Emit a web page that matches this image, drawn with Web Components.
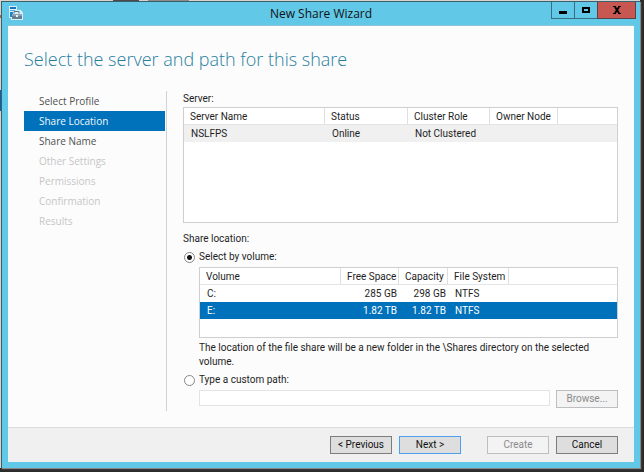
<!DOCTYPE html>
<html lang="en">
<head>
<meta charset="utf-8">
<title>New Share Wizard</title>
<style>
  html, body { height: 100%; }
  body { margin: 0; font: 10px/14px Roboto, "Open Sans", sans-serif; color: #1e1e1e; }
</style>
</head>
<body>
<share-wizard></share-wizard>

<template id="share-wizard">
  <style>
    :host { display: flex; box-sizing: border-box; min-height: 100%; padding: 1px 4px 4px 1px;
      background:
        linear-gradient(90deg, transparent 113px, #4b4b4b 113px 139px, transparent 139px 148px, #8d8d88 148px 189px, transparent 189px) 0 0 / 100% 1px no-repeat,
        linear-gradient(#0b62a8, #0b62a8) 0 90px / 1px 21px no-repeat,
        linear-gradient(#b3653a, #b3653a) 0 15px / 1px 3px no-repeat,
        linear-gradient(#d6d4cd, #d6d4cd) 0 0 / calc(100% - 4px) 1px no-repeat,
        linear-gradient(#d6d4cd, #d6d4cd) 0 0 / 1px calc(100% - 4px) no-repeat,
        #2c2b2b; }
    .window { flex: 1; display: flex; flex-direction: column; min-width: 0;
      border: solid #3b5f6c; border-width: 1px 0 0 1px; background: #62c8e8;
      box-shadow: 1px 1px 1px #8a8585; }
    .client { flex: 1; display: flex; flex-direction: column; margin: 0 6px 6px 6px; background: #fcfcfc;
      border-top: 1px solid #8fc4d6; }
    h1 { margin: 0; padding: 19px 16px 18px; font: 300 18px/28px "Open Sans", sans-serif; color: #277f9f; }
    .body { flex: 1; display: flex; padding: 0 16px 16px; gap: 16px; }
    wizard-steps { flex: 0 0 143px; }
    location-form { flex: 1; min-width: 0; }
    footer { display: flex; justify-content: flex-end; gap: 7px; padding: 8px 16px; background: #f0f0f0;
      border-top: 1px solid #dcdcdc; }
    .gap { width: 12px; }
  </style>
  <div class="window">
    <title-bar>New Share Wizard</title-bar>
    <div class="client">
      <h1>Select the server and path for this share</h1>
      <div class="body">
        <wizard-steps></wizard-steps>
        <location-form></location-form>
      </div>
      <footer>
        <push-button>&lt; Previous</push-button>
        <push-button primary>Next &gt;</push-button>
        <span class="gap"></span>
        <push-button disabled>Create</push-button>
        <push-button>Cancel</push-button>
      </footer>
    </div>
  </div>
</template>

<template id="title-bar">
  <style>
    :host { display: grid; grid-template-columns: 1fr auto 1fr; height: 23px; color: #111;
      font: 12px/24px "Open Sans", sans-serif; }
    .icon { margin: 4px 0 0 7px; display: block; }
    .controls { display: flex; justify-content: flex-end; align-items: flex-start; margin-right: 4px; }
    button { display: grid; place-items: center; box-sizing: border-box; width: 24px; height: 17px; margin: 0 0 0 -1px; padding: 0;
      border: 1px solid #356f82; border-top: 0; background: none; }
    button.close { width: 39px; background: #c75750; border-color: #5c4048; }
  </style>
  <svg class="icon" width="15" height="15" viewBox="0 0 15 15" aria-hidden="true">
    <path d="M0 0h8v4h4l2 3v7H2v-2H0z" fill="#d9eef6"/>
    <path d="M1 1h6v2H1z" fill="#1676bd"/>
    <path d="M1 4h5v1H1z" fill="#5aaee0"/>
    <path d="M1 6h3v5H1z" fill="#1f85c9"/>
    <path d="M5 7.500V5.500h5v2" fill="none" stroke="#53798d"/>
    <path d="M3 8h10v2H3z" fill="#8da3b2"/>
    <path d="M3 10h10v3H3z" fill="#647f92"/>
    <path d="M7 9h2v2H7z" fill="#e9f3f7"/>
  </svg>
  <slot></slot>
  <div class="controls">
    <button aria-label="Minimize"><svg width="10" height="10"><path d="M1 6h8v3H1z"/></svg></button>
    <button aria-label="Maximize"><svg width="10" height="10"><path d="M2 3h6v4H2z" fill="none" stroke="#000" stroke-width="2"/></svg></button>
    <button class="close" aria-label="Close"><svg width="10" height="10"><path d="M3 2l4 6M7 2L3 8" stroke="#000" stroke-width="2"/><path d="M1 1h3v1H1zM6 1h3v1H6zM1 8h3v1H1zM6 8h3v1H6z"/></svg></button>
  </div>
</template>

<template id="wizard-steps">
  <style>
    :host { display: block; box-sizing: border-box; border-right: 1px solid #d2d2d2; padding-right: 1px;
      font: 10px/20px "Open Sans", sans-serif; color: #505050; }
    ol { list-style: none; margin: 0; padding: 0; }
    li > * { display: block; padding-left: 15px; }
    a { color: inherit; text-decoration: none; }
    a[aria-current] { background: #0072bc; color: #f2f8fc; }
    span { color: #c6c6c6; }
  </style>
  <nav aria-label="Steps"><ol>
    <li><a href="#profile">Select Profile</a></li>
    <li><a href="#location" aria-current="step">Share Location</a></li>
    <li><a href="#name">Share Name</a></li>
    <li><span>Other Settings</span></li>
    <li><span>Permissions</span></li>
    <li><span>Confirmation</span></li>
    <li><span>Results</span></li>
  </ol></nav>
</template>

<template id="location-form">
  <style>
    :host { display: block; }
    .caption { line-height: 16px; }
    .servers { height: 116px; margin-bottom: 8px; }
    .volumes { height: 71px; }
    .option { display: flex; align-items: center; gap: 4px; height: 20px; }
    input[type=radio] { appearance: none; box-sizing: border-box; width: 11px; height: 11px; margin: 0 0 0 1px;
      border: 1px solid #858585; border-radius: 50%; background: #fff; }
    input[type=radio]:checked { background: radial-gradient(circle, #151515 0 2px, #fff 3px); }
    .nested { margin-left: 16px; }
    p { margin: 3px 0 1px; }
    .path { display: flex; gap: 6px; }
    .path input { flex: 1; min-width: 0; box-sizing: border-box; height: 16px; padding: 0 4px; border: 1px solid #e3e3e8; background: #fff; font: inherit; }
  </style>
  <div class="caption">Server:</div>
  <data-grid class="servers" kind="servers"></data-grid>
  <div class="caption">Share location:</div>
  <div class="option"><input type="radio" name="where" id="volume" checked><label for="volume">Select by volume:</label></div>
  <div class="nested">
    <data-grid class="volumes" kind="volumes"></data-grid>
    <p>The location of the file share will be a new folder in the \Shares directory on the selected volume.</p>
  </div>
  <div class="option"><input type="radio" name="where" id="custom"><label for="custom">Type a custom path:</label></div>
  <div class="nested path"><input type="text" aria-label="Custom path" disabled><push-button disabled>Browse...</push-button></div>
</template>

<template id="data-grid">
  <style>
    :host { display: block; box-sizing: border-box; border: 1px solid #cfcfcf; background: #fff; overflow: hidden; }
    table { width: 100%; table-layout: fixed; border-collapse: separate; border-spacing: 0; }
    th, td { box-sizing: border-box; height: 17px; padding: 0 4px 0 6px; text-align: left; font-weight: normal; line-height: 14px; white-space: nowrap; }
    th { padding-top: 2px; border-right: 1px solid #dedfe1; border-bottom: 1px solid #e3e4e6; }
    th:last-child { border-right: 0; }
    td { padding: 0 2px 0 7px; }
    .num { text-align: right; }
    tr.hover td { background: #f0f0f0; }
    tr.selected td { background: #0072bc; color: #fff; }
  </style>
  <table><colgroup></colgroup><thead></thead><tbody></tbody></table>
</template>

<template id="push-button">
  <style>
    :host { display: block; }
    button { box-sizing: border-box; display: block; width: 62px; height: 18px; padding: 0; border: 1px solid #7d7d7d; background: #dedede;
      font: inherit; line-height: 14px; color: #111; text-align: center; }
    :host([primary]) button { border-color: #4d9ff0; }
    button:disabled { border-color: #bcbfc2; background: #f3f3f3; color: #8a8a8a; }
  </style>
  <button type="button"><slot></slot></button>
</template>

<script>
  class Templated extends HTMLElement {
    constructor() {
      super();
      const template = document.getElementById(this.localName);
      this.attachShadow({ mode: 'open' }).append(template.content.cloneNode(true));
    }
  }

  const GRIDS = {
    servers: {
      columns: [['Server Name', 141], ['Status', 83], ['Cluster Role', 82], ['Owner Node', 68]],
      rows: [{ state: 'hover', cells: ['NSLFPS', 'Online', 'Not Clustered', ''] }],
    },
    volumes: {
      columns: [['Volume', 141], ['Free Space', 58, 'num'], ['Capacity', 49, 'num'], ['File System', 61]],
      rows: [
        { cells: ['C:', '285 GB', '298 GB', 'NTFS'] },
        { state: 'selected', cells: ['E:', '1.82 TB', '1.82 TB', 'NTFS'] },
      ],
    },
  };

  customElements.define('push-button', class extends Templated {
    connectedCallback() {
      this.shadowRoot.querySelector('button').disabled = this.hasAttribute('disabled');
    }
  });
  customElements.define('data-grid', class extends Templated {
    connectedCallback() {
      const { columns, rows } = GRIDS[this.getAttribute('kind')];
      const root = this.shadowRoot;
      const cls = i => columns[i][2] || '';
      root.querySelector('colgroup').innerHTML = columns.map(c => `<col style="width:${c[1]}px">`).join('') + '<col>';
      root.querySelector('thead').innerHTML = '<tr>' + columns.map((c, i) => `<th scope="col" class="${cls(i)}">${c[0]}</th>`).join('') + '<th></th></tr>';
      root.querySelector('tbody').innerHTML = rows.map(r => `<tr class="${r.state || ''}">` +
        r.cells.map((t, i) => `<td class="${cls(i)}">${t}</td>`).join('') + '<td></td></tr>').join('');
    }
  });
  for (const name of ['title-bar', 'wizard-steps', 'location-form', 'share-wizard']) {
    customElements.define(name, class extends Templated {});
  }
</script>
</body>
</html>
